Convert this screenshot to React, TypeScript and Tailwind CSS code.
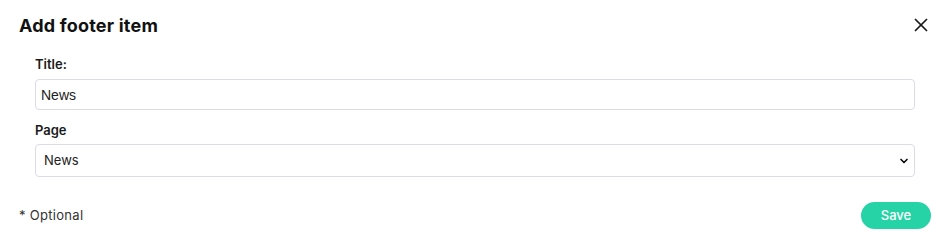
import { X, ChevronDown } from "lucide-react";

const font = "font-['Inter','Noto_Sans',sans-serif]";

export default function App() {
  return (
    <div className={`w-[950px] h-[250px] bg-white px-[19px] text-[#1a1a1a] ${font}`}>
      {/* HEADER */}
      <div className="flex items-center justify-between h-[50px]">
        <h2 className="text-[18px] font-bold tracking-[0.2px] text-[#111]">Add footer item</h2>
        <button className="text-[#1a1a1a] -mr-[1px]">
          <X className="size-[22px]" strokeWidth={1.9} />
        </button>
      </div>

      {/* FORM */}
      <div className="px-4">
        <label className="block text-[13px] font-semibold pt-[6px] leading-[16px]">Title:</label>
        <input
          defaultValue="News"
          className="mt-[7px] w-full h-[31px] rounded-[4px] border border-[#dedbe8] px-[5px] text-[14px] text-[#222] font-['Liberation_Sans',Arial,sans-serif] outline-none"
        />

        <label className="block text-[13px] font-semibold mt-[12px] leading-[16px]">Page</label>
        <div className="relative mt-[6px]">
          <select className="w-full h-[33px] appearance-none rounded-[4px] border border-[#dedbe8] bg-white px-[8px] text-[13px] text-[#222] outline-none">
            <option>News</option>
          </select>
          <ChevronDown
            className="absolute right-[5px] top-1/2 -translate-y-1/2 size-[12px] text-[#111] pointer-events-none"
            strokeWidth={3.5}
          />
        </div>
      </div>

      {/* FOOTER */}
      <div className="flex items-center justify-between mt-[25px]">
        <span className="text-[13px] tracking-[0.3px] text-[#333]">* Optional</span>
        <button className="w-[70px] h-[27px] rounded-full bg-[#26d3a6] text-white text-[13px] font-medium">
          Save
        </button>
      </div>
    </div>
  );
}
